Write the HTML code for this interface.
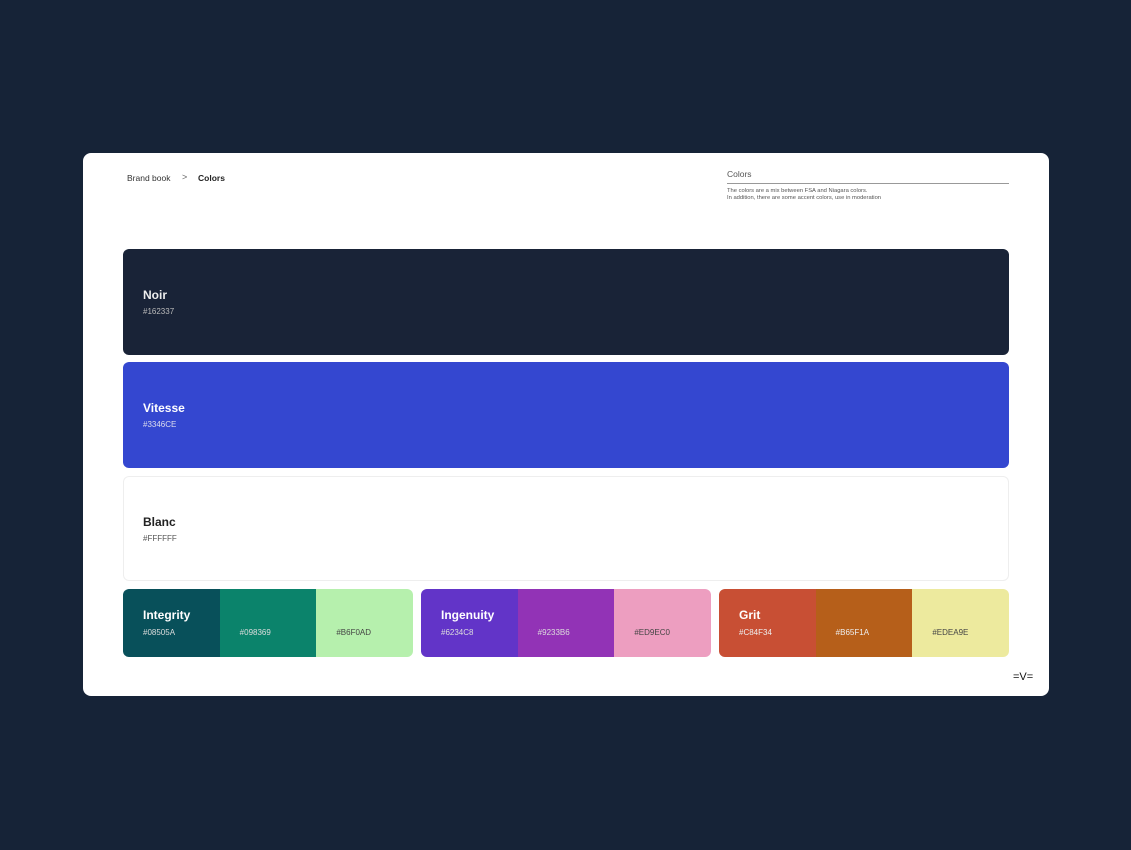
<!DOCTYPE html>
<html><head><style>
*{margin:0;padding:0;box-sizing:border-box}
body{width:1131px;height:850px;background:#162337;position:relative;font-family:"Liberation Sans",sans-serif;overflow:hidden}
.card{position:absolute;left:83px;top:153px;width:966px;height:543px;background:#fff;border-radius:8px}
.abs{position:absolute}
.sw{position:absolute;left:40px;width:886px;border-radius:6px}
.t{position:absolute;left:20px;font-size:12px;font-weight:bold;white-space:nowrap}
.h{position:absolute;left:20px;font-size:8px;white-space:nowrap}
.grp{position:absolute;top:436px;height:68px;width:290px;border-radius:6px;overflow:hidden;display:flex}
.grp>div{flex:1;position:relative}
.grp .t{top:19px}
.grp .h{top:39px}
</style></head><body>
<div class="card">
 <div class="abs" style="left:44px;top:20px;font-size:8.5px;color:#333">Brand book</div>
 <div class="abs" style="left:99px;top:19px;font-size:9px;color:#666">&gt;</div>
 <div class="abs" style="left:115px;top:20px;font-size:8.5px;font-weight:bold;color:#222">Colors</div>
 <div class="abs" style="left:644px;top:16px;font-size:8.5px;color:#555">Colors</div>
 <div class="abs" style="left:644px;top:30px;width:282px;height:1px;background:#999"></div>
 <div class="abs" style="left:644px;top:35px;font-size:5.8px;color:#555;line-height:7px">The colors are a mix between FSA and Niagara colors.<br>In addition, there are some accent colors, use in moderation</div>
 <div class="sw" style="top:96px;height:106px;background:#192337"><div class="t" style="top:39px;color:#eee">Noir</div><div class="h" style="top:58px;color:#bbb">#162337</div></div>
 <div class="sw" style="top:209px;height:106px;background:#3447d0"><div class="t" style="top:39px;color:#fff">Vitesse</div><div class="h" style="top:58px;color:#dde">#3346CE</div></div>
 <div class="sw" style="top:323px;height:105px;background:#fff;border:1px solid #eee"><div class="t" style="top:38px;left:19px;color:#222">Blanc</div><div class="h" style="top:57px;left:19px;color:#555">#FFFFFF</div></div>
 <div class="grp" style="left:40px">
  <div style="background:#08505a"><div class="t" style="color:#fff">Integrity</div><div class="h" style="color:#ddd">#08505A</div></div>
  <div style="background:#0b836b"><div class="h" style="color:#ddd">#098369</div></div>
  <div style="background:#b6f0ad"><div class="h" style="color:#444">#B6F0AD</div></div>
 </div>
 <div class="grp" style="left:338px">
  <div style="background:#6234c8"><div class="t" style="color:#fff">Ingenuity</div><div class="h" style="color:#ddd">#6234C8</div></div>
  <div style="background:#9233b6"><div class="h" style="color:#ddd">#9233B6</div></div>
  <div style="background:#ed9ec0"><div class="h" style="color:#444">#ED9EC0</div></div>
 </div>
 <div class="grp" style="left:636px">
  <div style="background:#c84f34"><div class="t" style="color:#fff">Grit</div><div class="h" style="color:#eee">#C84F34</div></div>
  <div style="background:#b65f1a"><div class="h" style="color:#eee">#B65F1A</div></div>
  <div style="background:#edea9e"><div class="h" style="color:#444">#EDEA9E</div></div>
 </div>
 <div class="abs" style="left:930px;top:518px;font-size:11px;color:#111">=V=</div>
</div>
</body></html>
